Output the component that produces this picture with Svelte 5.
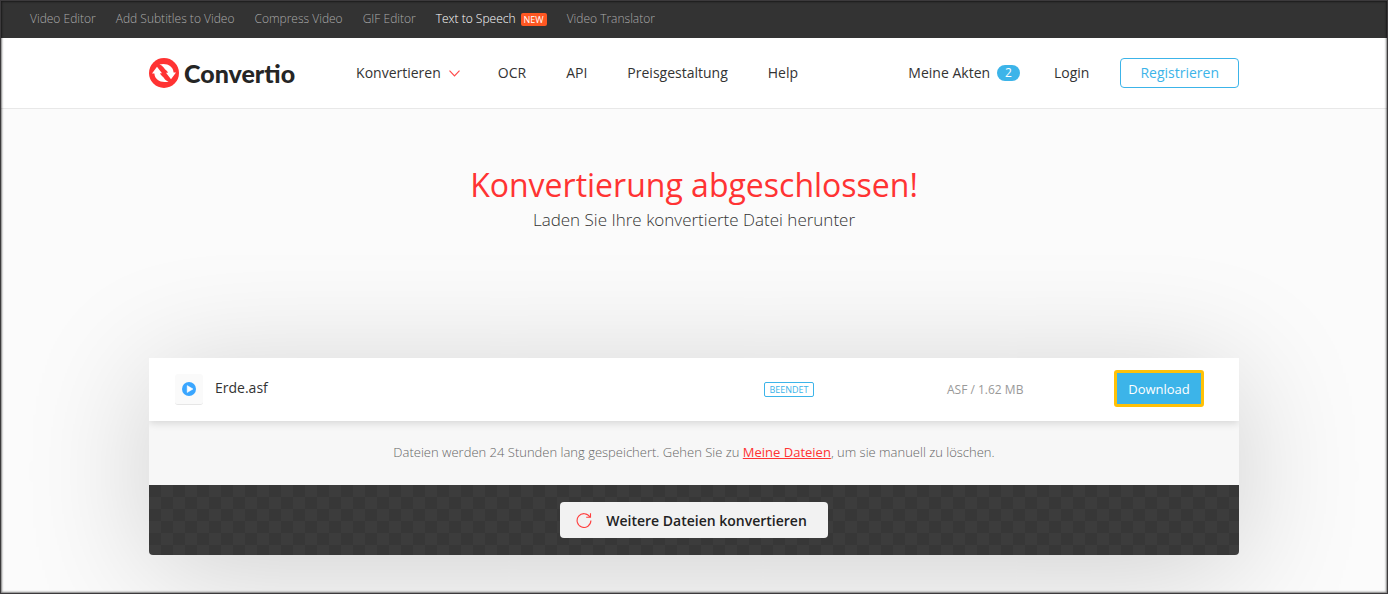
<script>
  const tools = [
    { label: 'Video Editor' },
    { label: 'Add Subtitles to Video' },
    { label: 'Compress Video' },
    { label: 'GIF Editor' },
    { label: 'Text to Speech', badge: 'NEW' },
    { label: 'Video Translator' }
  ];
  const links = ['OCR', 'API', 'Preisgestaltung', 'Help'];
  let files = $state([{ name: 'Erde.asf', status: 'BEENDET', info: 'ASF / 1.62 MB' }]);
</script>

<div class="page">
  <nav class="tools" aria-label="Tools">
    {#each tools as tool}
      <a href="#tools" class:active={tool.badge}>
        {tool.label}{#if tool.badge}<span class="new">{tool.badge}</span>{/if}
      </a>
    {/each}
  </nav>

  <header>
    <div class="container bar">
      <a class="logo" href="#home">
        <svg width="30" height="30" viewBox="0 0 30 30" aria-hidden="true">
          <circle cx="15" cy="15" r="15" fill="#ff3333" />
          <g fill="#fff">
            <path id="arrow" d="M3 15.6 L8 8.8 L13 15.2 H11 C11.6 17.2 13.4 18 14.4 19.3 C15.6 20.9 16.6 22.7 19.6 23.6 C12.6 25.4 5.8 22.4 5.4 15.6 Z" />
            <use href="#arrow" transform="rotate(180 15 15)" />
          </g>
        </svg>
        <span>Convertio</span>
      </a>
      <nav class="main" aria-label="Navigation">
        <a href="#convert">Konvertieren
          <svg width="11" height="7" viewBox="0 0 11 7" aria-hidden="true"><path d="M.5 .7 L5.5 5.9 L10.5 .7" fill="none" stroke="#ff4b4b" stroke-width="1.2" /></svg>
        </a>
        {#each links as link}<a href="#{link.toLowerCase()}">{link}</a>{/each}
      </nav>
      <nav class="account" aria-label="Konto">
        <a href="#files">Meine Akten <span class="count">2</span></a>
        <a href="#login">Login</a>
        <a class="register" href="#register">Registrieren</a>
      </nav>
    </div>
  </header>

  <main class="container">
    <h1>Konvertierung abgeschlossen!</h1>
    <p class="lead">Laden Sie Ihre konvertierte Datei herunter</p>

    <section class="card">
      {#each files as file}
        <div class="file">
          <span class="type">
            <svg width="14" height="14" viewBox="0 0 14 14" aria-hidden="true">
              <circle cx="7" cy="7" r="7" fill="#3aa6ff" />
              <path d="M5.2 3.6 L11 7 L5.2 10.5 Z" fill="#fff" stroke="#fff" stroke-width=".5" stroke-linejoin="round" />
            </svg>
          </span>
          <span class="name">{file.name}</span>
          <span class="status">{file.status}</span>
          <span class="info">{file.info}</span>
          <button class="download">Download</button>
        </div>
      {/each}
      <p class="note">Dateien werden 24 Stunden lang gespeichert. Gehen Sie zu <a href="#files">Meine Dateien</a>, um sie manuell zu löschen.</p>
      <div class="actions">
        <button class="more">
          <svg width="16" height="16" viewBox="0 0 16 16" fill="none" stroke="#ff3f3f" stroke-width="1.1" aria-hidden="true">
            <path d="M13.9 5 A6.9 6.9 0 1 0 14.9 8.6" />
            <path d="M14.5 1.2 V5.3 H10.2" />
          </svg>
          Weitere Dateien konvertieren
        </button>
      </div>
    </section>
  </main>
</div>

<style>
  :global(body) {
    margin: 0;
  }

  .page {
    position: relative;
    box-sizing: border-box;
    min-height: 100vh;
    overflow: hidden;
    background: #fbfbfb;
    color: #333;
    font: 14px/20px "Open Sans", "Noto Sans", sans-serif;
  }

  /* Dark frame around the whole page */
  .page::after {
    content: "";
    position: absolute;
    inset: 0;
    border: 1px solid #3c3a3c;
    box-shadow: inset 0 0 2px 1px rgba(0, 0, 0, 0.5);
    pointer-events: none;
  }

  a {
    color: inherit;
    text-decoration: none;
  }

  .container {
    box-sizing: border-box;
    width: 100%;
    max-width: 1090px;
    margin: 0 auto;
  }

  .tools {
    display: flex;
    align-items: center;
    gap: 20px;
    height: 38px;
    padding: 0 30px;
    background: #333;
    color: #aaa;
    font-size: 12px;
    font-weight: 300;
  }

  .tools a {
    display: flex;
    align-items: center;
    white-space: nowrap;
  }

  .tools .active {
    color: #fff;
  }

  .new {
    margin-left: 5px;
    padding: 0 3px;
    border-radius: 2px;
    background: #ff5722;
    font-size: 9px;
    font-weight: 500;
    line-height: 13px;
  }

  header {
    border-bottom: 1px solid #e8e8e8;
    background: #fff;
  }

  .bar {
    display: flex;
    align-items: center;
    height: 70px;
  }

  .bar a {
    display: flex;
    align-items: center;
    white-space: nowrap;
  }

  .bar .logo {
    align-items: flex-start;
    gap: 5px;
    color: #252525;
    font: 900 25px/30px Lato, sans-serif;
  }

  .main,
  .account {
    display: flex;
    align-items: center;
  }

  .main {
    gap: 40px;
    margin-left: 61px;
  }

  .main svg {
    margin: 0 -2px 0 8px;
  }

  .account {
    gap: 34px;
    margin-left: auto;
  }

  .count {
    margin-left: 7px;
    padding: 0 8px;
    border-radius: 8px;
    background: #3cb4e9;
    color: #fff;
    font-size: 12px;
    line-height: 16px;
  }

  .account .register {
    margin-left: -3px;
    padding: 4px 19px;
    border: 1px solid #3cb4e9;
    border-radius: 4px;
    color: #3cb4e9;
  }

  h1 {
    margin: 0;
    padding-top: 54px;
    color: #ff3333;
    font-size: 32px;
    font-weight: 400;
    line-height: 44px;
    text-align: center;
  }

  .lead {
    margin: 0;
    padding: 1px 0 126px;
    font-size: 17px;
    font-weight: 300;
    line-height: 24px;
    text-align: center;
  }

  .card {
    margin-bottom: 39px;
    border-radius: 4px;
    background: #f7f7f7;
    box-shadow: 0 15px 125px rgba(0, 0, 0, 0.18);
  }

  .file {
    display: grid;
    grid-template-columns: 40px 1fr 50px 300px 90px;
    align-items: center;
    box-sizing: border-box;
    height: 63px;
    padding: 0 35px 0 26px;
    background: #fff;
    box-shadow: 0 2px 8px rgba(0, 0, 0, 0.14);
    clip-path: inset(0 0 -10px);
  }

  .type {
    display: grid;
    place-items: center;
    width: 28px;
    height: 30px;
    border-bottom: 1px solid #e6e6e6;
    border-radius: 3px;
    background: #fafafa;
  }

  .name {
    padding-bottom: 4px;
  }

  .status {
    border: 1px solid #3cb4e9;
    border-radius: 2px;
    color: #3cb4e9;
    font-size: 9px;
    line-height: 13px;
    text-align: center;
  }

  .info {
    padding-left: 133px;
    color: #999;
    font-size: 12px;
  }

  button {
    cursor: pointer;
    font-family: inherit;
  }

  .download {
    height: 37px;
    margin-top: -2px;
    padding: 0;
    border: 3px solid #ffc107;
    border-radius: 3px;
    background: #3cb4e9;
    color: #fff;
    font-size: 13px;
    font-weight: 500;
  }

  .note {
    margin: 0;
    padding: 21px 20px 23px;
    color: #666;
    font-size: 13px;
    font-weight: 300;
    text-align: center;
  }

  .note a {
    color: #ff3333;
    font-weight: 400;
    text-decoration: underline;
  }

  .actions {
    display: flex;
    justify-content: center;
    padding: 17px;
    border-radius: 0 0 4px 4px;
    background: repeating-conic-gradient(#3c3c3c 0 25%, #373737 0 50%) 0 0 / 24px 24px;
  }

  .more {
    display: flex;
    align-items: center;
    gap: 14px;
    height: 36px;
    padding: 0 21px 0 16px;
    border: 0;
    border-radius: 4px;
    background: #f2f2f2;
    color: #222;
    font-size: 14px;
    font-weight: 600;
  }
</style>
